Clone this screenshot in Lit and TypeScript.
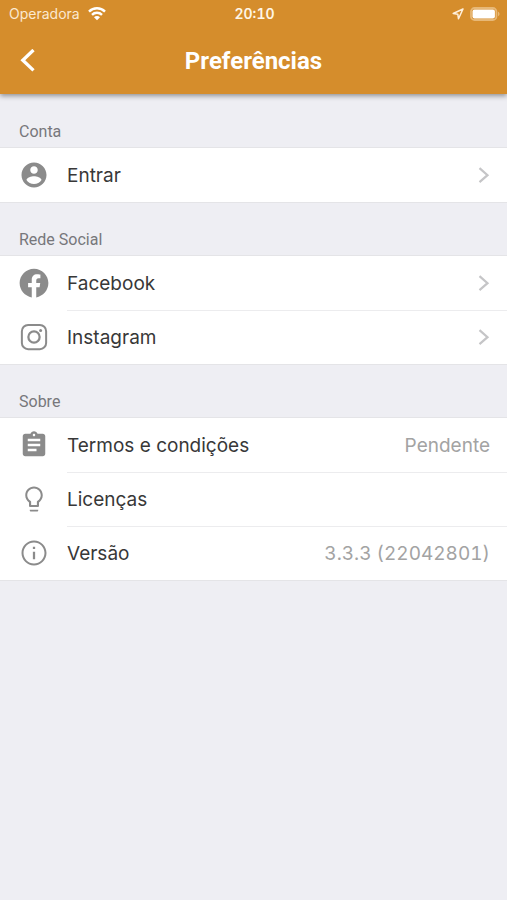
import { LitElement, html, svg, css, nothing } from "lit";
import type { SVGTemplateResult } from "lit";
import { customElement } from "lit/decorators.js";

interface Item {
  label: string;
  icon: SVGTemplateResult;
  href?: string;
  action?: boolean;
  chevron?: boolean;
  value?: string;
}

interface Section {
  title: string;
  items: Item[];
}

const icons = {
  account: svg`<path fill="currentColor" d="M12 2C6.48 2 2 6.48 2 12s4.48 10 10 10 10-4.48 10-10S17.52 2 12 2zm0 3c1.66 0 3 1.34 3 3s-1.34 3-3 3-3-1.34-3-3 1.34-3 3-3zm0 14.2c-2.5 0-4.71-1.28-6-3.22.03-1.99 4-3.08 6-3.08 1.99 0 5.97 1.09 6 3.08-1.29 1.94-3.5 3.22-6 3.22z"/>`,
  facebook: svg`<path fill="currentColor" d="M23.5 12.07C23.5 5.69 18.35.5 12 .5S.5 5.69.5 12.07c0 5.77 4.2 10.55 9.7 11.43v-8.09H7.28v-3.34h2.92V9.53c0-2.9 1.72-4.5 4.34-4.5 1.26 0 2.58.23 2.58.23V8.1h-1.45c-1.43 0-1.87.89-1.87 1.81v2.16h3.19l-.51 3.34H13.8v8.09c5.5-.88 9.7-5.66 9.7-11.43z"/>`,
  instagram: svg`<g fill="none" stroke="currentColor"><rect x="2.3" y="2.3" width="19.4" height="19.4" rx="5" stroke-width="1.6"/><circle cx="12" cy="12" r="4.5" stroke-width="1.8"/></g><circle cx="17.3" cy="6.7" r="1.2" fill="currentColor"/>`,
  terms: svg`<path fill="currentColor" d="M19 3h-4.18C14.4 1.84 13.3 1 12 1s-2.4.84-2.82 2H5c-1.1 0-2 .9-2 2v14c0 1.1.9 2 2 2h14c1.1 0 2-.9 2-2V5c0-1.1-.9-2-2-2zm-7 0c.55 0 1 .45 1 1s-.45 1-1 1-1-.45-1-1 .45-1 1-1zm2 14H7v-2h7v2zm3-4H7v-2h10v2zm0-4H7V7h10v2z"/>`,
  bulb: svg`<path fill="currentColor" d="M8.6 20.5v.4c0 .6.4 1 1 1h4.8c.6 0 1-.4 1-1v-.4zM12 2C8.14 2 5 5.14 5 9c0 2.38 1.190 4.470 3 5.740V17.400c0 .55.45 1 1 1h6c.55 0 1-.45 1-1v-2.660c1.810-1.270 3-3.360 3-5.740 0-3.860-3.140-7-7-7zm2.850 11.400l-.55.500V16.800H9.700v-2.900l-.55-.500C7.500 12.300 6.600 10.800 6.600 9c0-2.980 2.420-5.400 5.400-5.400s5.400 2.420 5.400 5.400c0 1.800-.9 3.300-2.550 4.400z"/>`,
  info: svg`<path fill="currentColor" d="M11.100 7h1.800v1.800h-1.800zm0 4h1.800v6h-1.800zM12 2C6.480 2 2 6.480 2 12s4.480 10 10 10 10-4.480 10-10S17.520 2 12 2zm0 18.400c-4.640 0-8.400-3.760-8.400-8.400S7.360 3.600 12 3.600s8.400 3.760 8.400 8.400-3.760 8.400-8.400 8.400z"/>`,
};

const sections: Section[] = [
  { title: "Conta", items: [{ label: "Entrar", icon: icons.account, action: true, chevron: true }] },
  {
    title: "Rede Social",
    items: [
      { label: "Facebook", icon: icons.facebook, href: "#facebook", chevron: true },
      { label: "Instagram", icon: icons.instagram, href: "#instagram", chevron: true },
    ],
  },
  {
    title: "Sobre",
    items: [
      { label: "Termos e condições", icon: icons.terms, action: true, value: "Pendente" },
      { label: "Licenças", icon: icons.bulb, action: true },
      { label: "Versão", icon: icons.info, value: "3.3.3 (22042801)" },
    ],
  },
];

@customElement("settings-row")
export class SettingsRow extends LitElement {
  static properties = {
    item: { attribute: false },
    first: { type: Boolean, reflect: true },
  };

  declare item: Item;
  declare first: boolean;

  static styles = css`
    :host {
      display: block;
    }
    .row {
      box-sizing: border-box;
      display: flex;
      align-items: stretch;
      width: 100%;
      height: 54px;
      margin: 0;
      padding: 0 0 0 19px;
      border: 0;
      background: #fff;
      color: #383838;
      font: 400 19px/24px Inter, sans-serif;
      text-align: left;
      text-decoration: none;
    }
    button.row,
    a.row {
      cursor: pointer;
    }
    .icon {
      align-self: center;
      flex: none;
      width: 30px;
      height: 30px;
      margin-right: 18px;
      color: #8b8b8b;
    }
    .body {
      flex: 1;
      display: flex;
      align-items: center;
      justify-content: space-between;
      padding-right: 17px;
      border-top: 1px solid #ececee;
    }
    :host([first]) .body {
      border-top-color: transparent;
    }
    .value {
      color: #a3a3a3;
      font-variant-numeric: tabular-nums;
    }
    .chevron {
      width: 12px;
      height: 18px;
      color: #c5c5c7;
    }
  `;

  render() {
    const { label, icon, href, action, chevron, value } = this.item;
    const content = html`
      <svg class="icon" viewBox="0 0 24 24" aria-hidden="true">${icon}</svg>
      <span class="body">
        <span>${label}</span>
        ${value ? html`<span class="value">${value}</span>` : nothing}
        ${chevron
          ? html`<svg class="chevron" viewBox="0 0 12 18" aria-hidden="true">
              <path d="M1.5 1.200l8 7-8 7" fill="none" stroke="currentColor" stroke-width="2.200" />
            </svg>`
          : nothing}
      </span>
    `;
    if (href) return html`<a class="row" href=${href}>${content}</a>`;
    if (action) return html`<button class="row" type="button">${content}</button>`;
    return html`<div class="row">${content}</div>`;
  }
}

@customElement("app-root")
export class AppRoot extends LitElement {
  static styles = css`
    :host {
      display: block;
      min-height: 100vh;
      background: #eeeef3;
      font-family: Inter, sans-serif;
    }
    header {
      position: relative;
      background: #d58d2c;
      color: #fff;
      box-shadow: 0 2px 5px rgba(0, 0, 0, 0.4);
    }
    .status,
    .nav {
      display: grid;
      grid-template-columns: 1fr auto 1fr;
      align-items: center;
    }
    .status {
      height: 27px;
      padding: 0 7px 0 9px;
      font-size: 14px;
      line-height: 18px;
    }
    .carrier,
    .indicators {
      display: flex;
      align-items: center;
      gap: 8px;
    }
    .carrier {
      color: #fbe9d0;
    }
    .indicators {
      justify-content: flex-end;
      gap: 6px;
    }
    .time {
      font-weight: 600;
      font-variant-numeric: tabular-nums;
      color: #fff6e6;
    }
    .wifi {
      width: 18px;
      height: 14px;
      color: #fff;
    }
    .location {
      width: 12px;
      height: 12px;
    }
    .battery {
      width: 30px;
      height: 14px;
    }
    .nav {
      height: 67px;
    }
    .back {
      display: flex;
      align-items: center;
      width: 48px;
      height: 48px;
      margin: 0;
      padding: 0 0 0 20px;
      border: 0;
      background: none;
      color: #fff;
      cursor: pointer;
    }
    .back svg {
      width: 16px;
      height: 24px;
    }
    h1 {
      margin: 0;
      font: 700 24px/32px Roboto, sans-serif;
    }
    main {
      padding-top: 1px;
    }
    h2 {
      box-sizing: border-box;
      height: 52px;
      margin: 0;
      padding: 27px 19px 0;
      color: #77777b;
      font: 400 16px/20px Roboto, sans-serif;
    }
    ul {
      margin: 0;
      padding: 0;
      list-style: none;
      border: solid #e4e4e7;
      border-width: 1px 0;
    }
  `;

  render() {
    return html`
      <header>
        <div class="status">
          <span class="carrier">
            Operadora
            <svg class="wifi" viewBox="0 0 18 14" aria-hidden="true">
              <g fill="none" stroke="currentColor" stroke-width="2.4">
                <path d="M1 4.600a11.300 11.300 0 0 1 16 0" />
                <path d="M4 7.900a7 7 0 0 1 10 0" />
              </g>
              <path fill="currentColor" d="M9 13.300l-3-3a4.200 4.200 0 0 1 6 0z" />
            </svg>
          </span>
          <span class="time">20:10</span>
          <span class="indicators">
            <svg class="location" viewBox="0 0 12 12" aria-hidden="true">
              <path d="M11 1L1.200 5.500l4.600.700.700 4.600z" fill="none" stroke="#fff0dc" stroke-width="1.500" stroke-linejoin="round" />
            </svg>
            <svg class="battery" viewBox="0 0 30 14" aria-hidden="true">
              <rect x="1" y="1" width="25.400" height="12" rx="3.600" fill="none" stroke="#e7b877" stroke-width="1.800" />
              <rect x="2.500" y="2.500" width="22.400" height="9" rx="2" fill="#fff" />
              <path d="M28 4.800c2 .7 2 3.700 0 4.400z" fill="#e7b877" />
            </svg>
          </span>
        </div>
        <div class="nav">
          <button class="back" type="button" aria-label="Voltar">
            <svg viewBox="0 0 16 24" aria-hidden="true">
              <path d="M13.500 1L2.800 11.200 13.500 21.400" fill="none" stroke="currentColor" stroke-width="3.300" />
            </svg>
          </button>
          <h1>Preferências</h1>
        </div>
      </header>
      <main>
        ${sections.map(
          (section) => html`
            <section>
              <h2>${section.title}</h2>
              <ul>
                ${section.items.map(
                  (item, i) => html`<li><settings-row .item=${item} ?first=${i === 0}></settings-row></li>`
                )}
              </ul>
            </section>
          `
        )}
      </main>
    `;
  }
}
